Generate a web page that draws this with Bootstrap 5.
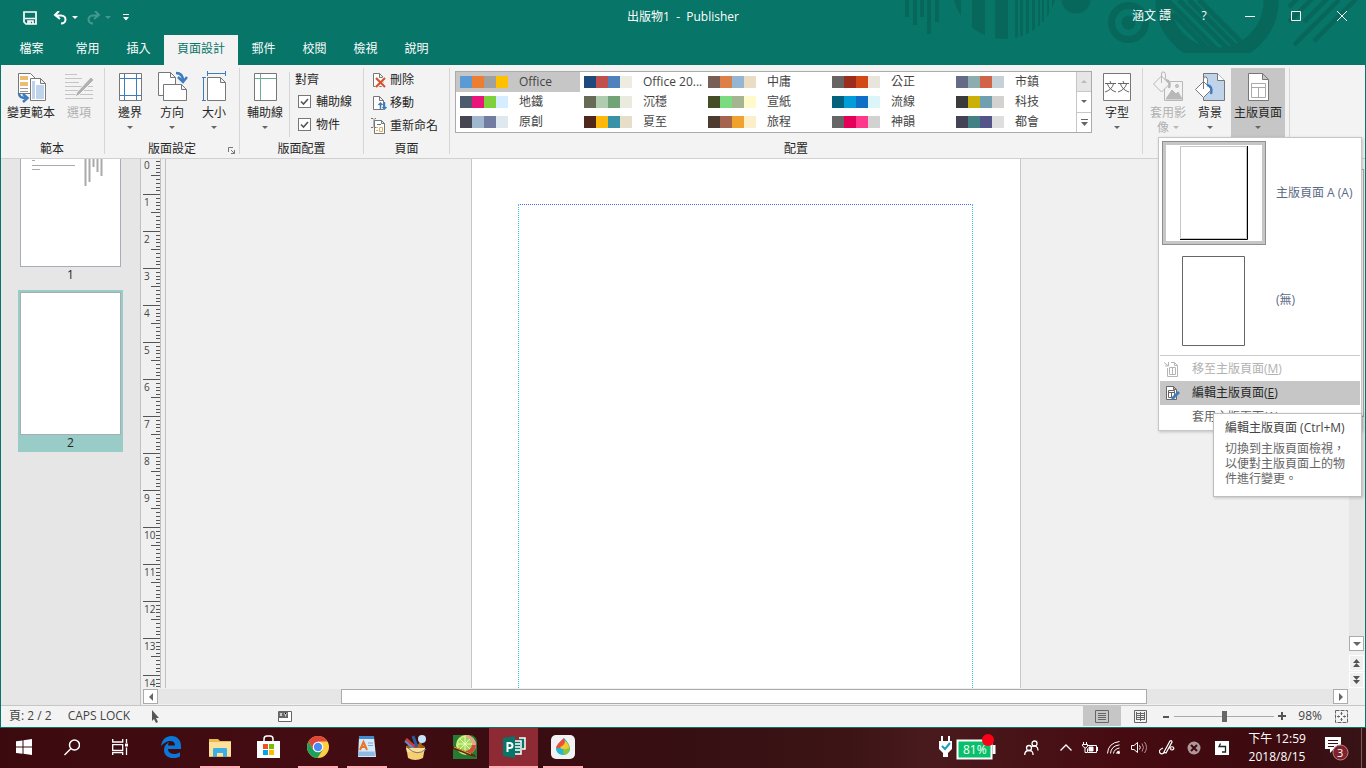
<!DOCTYPE html>
<html lang="zh-Hant">
<head>
<meta charset="utf-8">
<meta name="viewport" content="width=device-width, initial-scale=1">
<title>出版物1 - Publisher</title>
<link rel="stylesheet" href="https://cdn.jsdelivr.net/npm/bootstrap@5.3.0/dist/css/bootstrap.min.css">
<style>
:root{--pub:#077568;--line:#c6c6c6;--edge:#ababab}
body{font:12px/16px "Open Sans","Noto Sans CJK TC",sans-serif;color:#262626;background:#f0f0f0}
button{font:inherit;line-height:16px;color:inherit;background:none;border:0;padding:0}
svg{display:block;flex:none}
.app{border:solid var(--pub);border-width:0 1px 1px;min-height:0}
.topbar{background:var(--pub);color:#fff}
.deco{position:absolute;top:0;right:0}
.titlebar{height:35px}
.doc-title{position:absolute;left:0;right:0;top:9px;text-align:center;pointer-events:none}
.user{margin-right:10px}
.winbtn{width:46px;height:32px}
.qat{padding-left:22px;gap:8px}
.qat .tri{border-top-color:#fff}
.tabs a{color:#fff;width:51px;height:30px;line-height:28px;text-align:center;text-decoration:none}
.tabs a.file{width:61px}
.tabs a.now{width:74px;background:#f3f3f3;color:var(--pub)}
.ribbon{background:#f3f3f3;height:94px;border-bottom:1px solid #d0d0d0;padding:3px 0 4px}
.grp{border-right:1px solid #d5d5d5;padding:0 4px;height:86px}
.grp:first-child{padding-left:3px}
.grp-name{text-align:center;height:16px;margin-bottom:-3px}
.big{width:42px;height:69px;padding-top:3px;display:flex;flex-direction:column;align-items:center;white-space:nowrap}
.big svg{margin-bottom:2px}
.wide{width:54px}
.pressed{background:#c6c6c6}
.tri{display:inline-block;border:3px solid transparent;border-top-color:#666;border-bottom:0;flex:none}
.tri.up{border:3px solid transparent;border-top:0;border-bottom-color:#bbb}
.big .tri{margin-top:5px}
.off{color:#b1b1b1}
.off .tri{border-top-color:#b8b8b8}
.tick{appearance:none;width:13px;height:13px;border:1px solid #777;background:#fff;margin:0}
.tick:checked{background:#fff url("data:image/svg+xml,%3Csvg xmlns='http://www.w3.org/2000/svg' viewBox='0 0 11 11'%3E%3Cpath d='M2 5.5l2.5 2.5L9 3' fill='none' stroke='%23555' stroke-width='1.6'/%3E%3C/svg%3E")}
.small-row{height:23px;gap:3px}
.align-box{border-left:1px solid #d5d5d5;margin:4px 0 0 3px;padding-left:5px}
.align-box .small-row{padding-left:3px;gap:5px}
.align-box div:first-child{padding-bottom:2px}
.page-cmds{padding-left:3px}
.gallery{border:1px solid var(--edge);background:#fff;height:62px;margin:3px 0 0 1px}
.schemes{display:grid;grid-template-columns:repeat(5,124px);grid-auto-rows:20px}
.scheme{display:flex;align-items:center;padding-left:4px;color:#444}
.scheme i{width:12px;height:12px;background:var(--c)}
.scheme span{margin-left:11px}
.gal-nav{width:15px;border-left:1px solid var(--line)}
.gal-nav button{flex:1;border-bottom:1px solid var(--line);display:flex;flex-direction:column;align-items:center;justify-content:center;gap:2px}
.gal-nav button:first-child{background:#e6e6e6}
.gal-nav button:last-child{border:0}
.pane{width:140px;background:#e6e6e6;border-right:1px solid #c0c0c0}
.thumb{background:#fff;border:1px solid #a6adb8;width:101px}
.thumb-btn{width:105px;margin-left:17px;display:flex;flex-direction:column;align-items:center}
.thumb-btn.sel{background:#99ccc6;padding:2px 0 1px;margin-top:7px}
.ruler{width:20px;border-right:1px solid #c0c0c0;overflow:hidden}
.cm{height:37px;display:flex;align-items:flex-end;font-size:10px;line-height:12px;color:#444;position:relative}
.cm svg{margin-left:2px}
.cm b{position:absolute;left:3px;top:2px;font-weight:400}
.cm.zero{height:35px;overflow:hidden}
.cm.zero b{top:0}
.canvas{border-left:1px solid #c0c0c0;margin-left:4px;padding-right:23px;overflow:hidden}
.sheet{width:550px;background:#fff;border:solid var(--line);border-width:0 1px;padding:45px 47px 0 46px}
.guide{height:100%;border:1px dotted #30c8d0;border-top-color:#4f6bff;border-bottom:0}
.vbar{width:16px;padding-top:10px}
.track{background:#e6e6e6}
.knob{background:#fff;border:1px solid var(--edge)}
.sbtn{width:15px;height:15px;background:#fff;border:1px solid var(--edge);display:flex;align-items:center;justify-content:center}
.pbtn{width:15px;height:16px;background:#f0f0f0;border:1px solid #fff;display:flex;align-items:center;justify-content:center}
.pbtn:last-child{margin-top:1px}
.hbar{height:17px;padding:1px 17px 1px 2px}
.status{height:22px;border-top:1px solid var(--line);background:#f3f3f3;color:#444;padding-bottom:1px}
.pointer{margin-left:21px}
.xy{margin-left:118px}
.view{width:38px;height:20px;display:flex;align-items:center;justify-content:center}
.zoom{appearance:none;width:100px;height:11px;background:linear-gradient(#aaa,#aaa) center/100% 1px no-repeat;margin:0 4px}
.zoom::-webkit-slider-thumb{appearance:none;width:5px;height:11px;background:#666}
.fit{margin:0 17px 0 13px}
.menu{--bs-dropdown-min-width:204px;width:204px;top:72px;right:3px;font-size:12px;padding:3px 1px 1px;border:1px solid var(--line);border-radius:0;box-shadow:1px 1px 3px #0003;color:#666}
.master{display:flex;align-items:center;width:100%;color:#5b6a85;padding-left:2px}
.frame{width:104px;height:104px;margin-right:10px;display:flex;align-items:center;justify-content:center;border:1px solid transparent}
.frame.on{border-color:#8f8f8f;box-shadow:inset 0 0 0 3px #c6c6c6}
.frame.none{height:110px;padding-top:2px}
.menu-row{display:flex;align-items:center;height:24px;width:100%;padding-left:4px;gap:12px}
.menu-row.pressed{color:#262626}
.menu hr{margin:0 0 1px;border-color:#ccc;opacity:1}
.tip{position:absolute;top:275px;right:-1px;width:149px;height:84px;background:#fff;border:1px solid #bebebe;box-shadow:1px 1px 3px #0003;padding:6px 0 0 11px;color:#444;white-space:nowrap}
.tip p{line-height:15px;margin:5px 0 0;color:#666}
.taskbar{height:40px;color:#fff;background:linear-gradient(90deg,#3b0a0f,#430c12 22%,#3a0c11 38%,#361013 52%,#3c1416 62%,#491a1d 68%,#460b11 82%,#3c0a0f 93%,#371417)}
.task{width:49px;height:40px;padding-bottom:2px;display:flex;align-items:center;justify-content:center;position:relative}
.sys{width:48px}
.sys.end{margin-right:2px}
.run::after{content:"";position:absolute;left:5px;right:4px;bottom:0;height:2px;background:#ffaeb5}
.front{background:#8e2a33}
.front::after{left:0;right:0}
.tray{height:40px;padding-bottom:1px;display:flex;align-items:center;justify-content:center}
.w24{width:24px}.w27{width:27px}.w30{width:30px}.w46{width:46px}.w48{width:48px}
.power{margin-right:12px}
.clock{width:76px;line-height:18px;padding-left:4px}
.peek{width:5px;border-left:1px solid #80595c}
</style>
</head>
<body class="vh-100 d-flex flex-column overflow-hidden">
<svg width="0" height="0" class="position-absolute">
 <defs>
  <symbol id="ticks" viewBox="0 0 17 37"><path d="M0 .5h17M13 4.5h4M13 8.500h4M13 11.500h4M13 15.500h4M8 18.500h9M13 22.500h4M13 26.500h4M13 30.500h4M13 33.500h4" stroke="#555"/></symbol>
 </defs>
</svg>
<div class="app flex-fill d-flex flex-column">
 <header class="topbar position-relative">
  <svg class="deco" width="466" height="54" viewBox="900 0 466 54" fill="#08675b">
   <clipPath id="c1"><circle cx="1005.500" cy="-13" r="52"/></clipPath><clipPath id="c2"><circle cx="1218" cy="1" r="47"/></clipPath>
   <path d="M906 0h4v17h-4zM914 0h4v25h-4zM921 0h4v17h-4zM928 0h4v34h-4zM936 0h4v22h-4z"/>
   <path clip-path="url(#c1)" d="M953 0h9v40h-9zM973 0h13v40h-13zM996 0h13v40h-13zM1016 0h3v40h-3zM1021 0h3v40h-3zM1027 0h3v40h-3zM1033 0h3v40h-3zM1039 0h2v40h-2zM1043 0h2v40h-2zM1048 0h2v40h-2zM1053 0h3v40h-3z"/>
   <circle cx="1077" cy="-1" r="14.500"/><circle cx="1129.500" cy="22.500" r="7"/>
   <g fill="none" stroke="#08675b"><circle cx="1129.500" cy="22.500" r="17" stroke-width="7"/>
   <circle cx="1218" cy="1" r="54" stroke-width="15"/>
   <path clip-path="url(#c2)" stroke-width="5" d="M1168 0l60 60M1180 0l60 60M1190 0l60 60M1200 0l60 60M1174 14l40 40"/>
   <path stroke-width="4.500" d="M1295 45l45-45M1315 41l42-42M1290 7l8-8M1290 22l23-23M1305 22l23-23"/></g>
   <path d="M1180 53h80v1h-80z" fill="#077568"/>
  </svg>
  <div class="titlebar d-flex align-items-start position-relative">
   <div class="qat d-flex align-items-center h-100">
    <button class="me-1" aria-label="儲存"><svg width="14" height="14" fill="none" stroke="#fff" stroke-width="1.700"><path d="M1 1h12v12H3l-2-2zM2 7.500h10M5 13v-3h5v3M7 10.500v2"/></svg></button>
    <button aria-label="復原" class="d-flex align-items-center gap-1 ms-1"><svg width="15" height="14" fill="none" stroke="#fff" stroke-width="2"><path d="M6 0L2 4l5 4M2 4.500h6c6 0 6 8 0 8"/></svg><span class="tri"></span></button>
    <button aria-label="重做" class="d-flex align-items-center gap-1 opacity-25"><svg width="15" height="14" fill="none" stroke="#fff" stroke-width="2"><path d="M9 0l4 4-5 4M13 4.500H7c-6 0-6 8 0 8"/></svg><span class="tri"></span></button>
    <button aria-label="自訂" class="ms-1"><svg width="6" height="7" fill="#fff"><path d="M0 0h6v1H0zM0 3h6L3 6.500z"/></svg></button>
   </div>
   <div class="doc-title">出版物1&nbsp; -&nbsp; Publisher</div>
   <div class="ms-auto d-flex">
    <button class="user">涵文 譚</button>
    <button class="winbtn">?</button>
    <button class="winbtn" aria-label="最小化"><svg class="mx-auto" width="10" height="10" stroke="#fff"><path d="M0 5.500h10"/></svg></button>
    <button class="winbtn" aria-label="最大化"><svg class="mx-auto" width="10" height="10" stroke="#fff" fill="none"><path d="M.5.500h9v9h-9z"/></svg></button>
    <button class="winbtn" aria-label="關閉"><svg class="mx-auto" width="10" height="10" stroke="#fff"><path d="M0 0l10 10M10 0L0 10"/></svg></button>
   </div>
  </div>
  <nav class="tabs d-flex position-relative">
   <a class="file" href="#">檔案</a><a href="#">常用</a><a href="#">插入</a><a class="now" href="#">頁面設計</a><a href="#">郵件</a><a href="#">校閱</a><a href="#">檢視</a><a href="#">說明</a>
  </nav>
 </header>

 <div class="ribbon d-flex position-relative">
  <section class="grp d-flex flex-column justify-content-between">
   <div class="d-flex">
    <button class="big wide"><svg width="32" height="32" fill="#fff" stroke="#777"><path d="M3.500 2.500h12l5 5v15h-17z"/><path d="M5 5h8v4H5zM5 11h8v4H5z" fill="#ecbb74" stroke="none"/><path d="M5 17.500h8M5 20.500h8" stroke="#999"/><path d="M15.500 7.500h10l5 5v17h-15zM25.500 7.500v5h5"/><path d="M17 10h3v18h-3zM21 14h8v14h-8z" fill="#bfd3ea" stroke="none"/><path d="M4 22c0 4 2 5 8 5M8 23l4.500 4L8 31" fill="none" stroke="#3f7cbf" stroke-width="2.500"/></svg>變更範本</button>
    <button class="big off" disabled><svg width="32" height="32" stroke="#c4c4c4"><path d="M2 3.500h12M2 7.500h17M2 11.500h14M2 15.500h28M2 19.500h28M2 23.500h28M2 27.500h28"/><path d="M12 26l2-5L28 6l3 3-15 15z" fill="#b1b1b1" stroke="#f3f3f3"/></svg>選項</button>
   </div>
   <div class="grp-name">範本</div>
  </section>
  <section class="grp d-flex flex-column justify-content-between position-relative">
   <div class="d-flex">
    <button class="big"><svg width="32" height="32" fill="#fff" stroke="#777"><path d="M5.500 2.500h22v27h-22z"/><path d="M10.500 3v26M22.500 3v26M6 7.500h21M6 24.500h21" stroke="#3f7cbf"/></svg>邊界<span class="tri"></span></button>
    <button class="big"><svg width="32" height="32" fill="#fff" stroke="#777"><path d="M2.500 1.500h12l5 5v18h-17zM14.500 1.500v5h5"/><path d="M7.500 13.500h18l5 5v11h-23zM25.500 13.500v5h5"/><path d="M20 2c4 0 7 2 7 8M22 6l5 5 4-5" fill="none" stroke="#3f7cbf" stroke-width="2.500"/></svg>方向<span class="tri"></span></button>
    <button class="big"><svg width="32" height="32" fill="#fff" stroke="#777"><path d="M9.500 6.500h13l5 5v18h-18zM22.500 6.500v5h5"/><path d="M9 2.500h19M9.500 0v5M27.500 0v5M5.500 6v23M4 6.500h4M4 29.500h4" stroke="#3f7cbf"/></svg>大小<span class="tri"></span></button>
   </div>
   <div class="grp-name">版面設定</div>
   <button class="position-absolute bottom-0 end-0 me-1" aria-label="對話方塊啟動器"><svg width="7" height="7" fill="none" stroke="#777"><path d="M.5 5V.5H5M3 3l3.500 3.500M6.500 3v3.500H3"/></svg></button>
  </section>
  <section class="grp d-flex flex-column justify-content-between" style="width:124px">
   <div class="d-flex">
    <button class="big flex-shrink-0"><svg width="32" height="32" fill="#fff" stroke="#777"><path d="M5.500 2.500h22v27h-22z"/><path d="M11.500 3v26M6 7.500h21" stroke="#6cab94"/></svg>輔助線<span class="tri"></span></button>
    <div class="align-box">
     <div>對齊</div>
     <div class="d-flex align-items-center small-row"><input class="tick" type="checkbox" id="k1" checked><label for="k1">輔助線</label></div>
     <div class="d-flex align-items-center small-row"><input class="tick" type="checkbox" id="k2" checked><label for="k2">物件</label></div>
    </div>
   </div>
   <div class="grp-name">版面配置</div>
  </section>
  <section class="grp d-flex flex-column justify-content-between" style="width:86px">
   <div class="page-cmds">
    <button class="small-row d-flex align-items-center"><svg width="16" height="16" fill="#fff" stroke="#777"><path d="M2.500 1.500h6l4 4v9h-10zM8.500 1.500v4h4"/><path d="M5 6l9 9M14 6l-9 9" stroke="#f3f3f3" stroke-width="4"/><path d="M5 6l9 9M14 6l-9 9" stroke="#d8502b" stroke-width="2"/></svg>刪除</button>
    <button class="small-row d-flex align-items-center"><svg width="16" height="16" fill="#fff" stroke="#777"><path d="M2.500 1.500h6l4 4v9h-10zM8.500 1.500v4h4"/><path d="M9.500 14V8M7.500 10l2-2 2 2M13.500 7v7M11.500 12l2 2 2-2" fill="none" stroke="#3f7cbf" stroke-width="1.500"/></svg>移動</button>
    <button class="small-row d-flex align-items-center text-nowrap"><svg width="16" height="16" fill="#fff" stroke="#777"><path d="M3.500 2.500h7l3 3v10h-10zM10.500 2.500v3h3"/><path d="M0 .5h2l1 1 1-1h1M3 2v6M0 9.500h2l1-1 1 1h1" fill="none"/><path d="M6 6.500h4" stroke="#3f7cbf"/><path d="M5 9.500h2M8.500 9.500h3v4h-3zM5 12.500h2" stroke="#e6ad5d"/></svg>重新命名</button>
   </div>
   <div class="grp-name">頁面</div>
  </section>
  <section class="grp d-flex flex-column justify-content-between">
   <div class="d-flex">
    <div class="gallery d-flex">
     <div class="schemes" id="schemes"></div>
     <div class="gal-nav d-flex flex-column">
      <button aria-label="上"><span class="tri up"></span></button>
      <button aria-label="下"><span class="tri"></span></button>
      <button aria-label="更多"><svg width="7" height="7" fill="#666"><path d="M0 0h7v1H0zM0 3h7L3.500 7z"/></svg></button>
     </div>
    </div>
    <button class="big ms-1"><svg width="32" height="32" fill="#fff"><path d="M2.500 2.500h27v27h-27z" stroke="#777"/><g fill="none" stroke="#666"><path d="M4 12.500h11M9 10l1 2.500M6.500 13q2 6 8.500 8M12.500 13q-2 6-8.500 8M17 12.500h11M22 10l1 2.500M19.500 13q2 6 8.500 8M25.500 13q-2 6-8.500 8"/></g></svg>字型<span class="tri"></span></button>
   </div>
   <div class="grp-name">配置</div>
  </section>
  <section class="grp d-flex">
   <button class="big off" disabled><svg width="32" height="32" fill="#f3f3f3" stroke="#b8b8b8"><path d="M12.500 10.500h18v19h-18z"/><path d="M14 28l6-9 4 4 2-2 4 7z" fill="#b8b8b8"/><circle cx="25" cy="15" r="1.500" fill="#ccc"/><path d="M1.500 13l8-8 8 8-8 8zM9.500 12V3q0-3 2.500-2t1 8" /><path d="M14 9q5 1 3 8" fill="none" stroke-width="2.500"/></svg>套用影<span class="d-flex align-items-center" style="line-height:13px">像<span class="tri m-0 ms-1"></span></span></button>
   <button class="big"><svg width="32" height="32" fill="#bfd3ea" stroke="#777"><path d="M9.500 2.500h14l7 7v20h-21z"/><path d="M23.500 2.500v7h7" fill="#fff"/><path d="M1.500 18.500l8-8 8 8-8 8zM9.500 18V8q0-3 2.500-2t1 8" fill="#fff"/><path d="M13 14q6 1 4 9" fill="none" stroke="#3f7cbf" stroke-width="2.500"/></svg>背景<span class="tri"></span></button>
   <button class="big wide pressed" id="masterBtn"><svg width="32" height="32" fill="#fff" stroke="#777"><path d="M6.500 2.500h14l6 6v21h-20zM20.500 2.500v6h6"/><path d="M9.500 12.500h14v14h-14zM9.500 16.500h14M16.500 16v10" stroke="#aaa"/></svg>主版頁面<span class="tri"></span></button>
  </section>
  <div class="dropdown-menu show menu">
   <button class="master"><span class="frame on"><svg width="69" height="95"><path d="M.5.500h66v92H.5z" fill="#fff" stroke="#c6c6c6"/><path d="M0 93.500h67.500V0" fill="none" stroke="#000"/></svg></span>主版頁面 A (A)</button>
   <button class="master"><span class="frame none"><svg width="64" height="91"><path d="M.5.500h62v89H.5z" fill="#fff" stroke="#666"/></svg></span>(無)</button>
   <hr>
   <button class="menu-row off" disabled><svg width="16" height="16" fill="none" stroke="#b5b5b5"><path d="M3.500 7v8.500h10V4.500l-3-3H7M5.500 6.500h6v7h-6zM8.500 7v6M10.500 1.500v3h3M0 1.500l4 3M4.500 1v4H1"/></svg><span>移至主版頁面(<u>M</u>)</span></button>
   <button class="menu-row pressed"><svg width="16" height="16" fill="#fff" stroke="#666"><path d="M2.500 1.500h7l3 3v10h-10zM9.500 1.500v3h3M4.500 5.500h6v7h-6zM4.500 7.500h6M7.500 8v4"/><path d="M8 14l7-7" stroke="#3f7cbf" stroke-width="3"/></svg><span>編輯主版頁面(<u>E</u>)</span></button>
   <button class="menu-row"><svg width="16" height="16"></svg><span>套用主版頁面(<u>A</u>)</span></button>
   <div class="tip" role="tooltip">編輯主版頁面 (Ctrl+M)<p>切換到主版頁面檢視，<br>以便對主版頁面上的物<br>件進行變更。</p></div>
  </div>
 </div>

 <div class="flex-fill d-flex" style="min-height:0">
  <aside class="pane flex-shrink-0">
   <button class="thumb-btn"><span class="thumb d-block border-top-0"><svg width="99" height="107" stroke="#aaa"><path d="M11 1.500h3M11 6.500h43M11 10.500h8"/><path d="M64.500 0v27M68.500 0v23M72.500 0v8M76.500 0v13M80.500 0v17" stroke-width="2"/></svg></span>1</button>
   <button class="thumb-btn sel"><span class="thumb d-block"><svg width="99" height="141"></svg></span>2</button>
  </aside>
  <div class="flex-fill d-flex flex-column" style="min-width:0">
   <div class="flex-fill d-flex" style="min-height:0">
    <div class="ruler flex-shrink-0" id="ruler"></div>
    <main class="canvas flex-fill d-flex justify-content-center"><div class="sheet"><div class="guide"></div></div></main>
    <div class="vbar d-flex flex-column flex-shrink-0">
     <div class="track flex-fill"><div class="knob" style="width:15px;height:53%"></div></div>
     <button class="sbtn" aria-label="向下"><svg width="8" height="4" fill="#666"><path d="M0 0h8L4 4z"/></svg></button>
     <button class="pbtn mt-1" aria-label="上一頁"><svg width="7" height="8" fill="#555"><path d="M3.500 0L7 4H0zM3.500 4L7 8H0z"/></svg></button>
     <button class="pbtn" aria-label="下一頁"><svg width="7" height="8" fill="#555"><path d="M3.500 8L7 4H0zM3.500 4L7 0H0z"/></svg></button>
    </div>
   </div>
   <div class="hbar d-flex flex-shrink-0">
    <button class="sbtn" aria-label="向左"><svg width="4" height="8" fill="#666"><path d="M4 0v8L0 4z"/></svg></button>
    <div class="track flex-fill"><div class="knob h-100" style="width:68.600%;margin-left:15.600%"></div></div>
    <button class="sbtn" aria-label="向右"><svg width="4" height="8" fill="#666"><path d="M0 0v8l4-4z"/></svg></button>
   </div>
  </div>
 </div>

 <footer class="status d-flex align-items-center">
  <span class="ms-2">頁: 2 / 2</span><span class="ms-3">CAPS LOCK</span>
  <svg class="pointer" width="9" height="13" fill="#555"><path d="M1 0l7 8H5l2 4-2 1-2-4-2 2z"/></svg>
  <svg class="xy" width="14" height="11"><path d="M.5.500h13v10H.5z" fill="#fff" stroke="#666"/><path d="M1 1h9v6H1z" fill="#666"/><path d="M2 2l2 3M4 2L2 5M6 2l1.500 2L9 2M7.500 4v1.500" stroke="#fff" stroke-width=".8"/></svg>
  <div class="ms-auto d-flex align-items-center">
   <button class="view pressed" aria-label="單頁"><svg width="14" height="13" fill="none" stroke="#666"><path d="M.5.500h13v12H.5zM3 3.500h8M3 5.500h8M3 7.500h8M3 9.500h8"/></svg></button>
   <button class="view" aria-label="雙頁"><svg width="13" height="13" fill="none" stroke="#666"><path d="M.5.500h12v12H.5zM2 3.500h9M2 5.500h9M2 7.500h9M2 9.500h9M6.500 2v9M2.500 2v8M10.500 2v8"/></svg></button>
   <button aria-label="縮小" class="ms-1"><svg width="7" height="7" fill="#555"><path d="M0 3h6v2H0z"/></svg></button>
   <input class="zoom" type="range" min="10" max="187" value="98" aria-label="縮放">
   <button aria-label="放大"><svg width="8" height="8" fill="#555"><path d="M0 3h3V0h2v3h3v2H5v3H3V5H0z"/></svg></button>
   <span class="ms-2 ps-1">98%</span>
   <button class="fit" aria-label="符合視窗"><svg width="13" height="13" fill="none" stroke="#666"><path d="M.5.500h12v12H.5z" stroke-dasharray="4 1"/><path d="M6.500 2v3M6.500 8v3M2 6.500h3M8 6.500h3M5.500 3.500h2M5.500 9.500h2M3.500 5.500v2M9.500 5.500v2"/></svg></button>
  </div>
 </footer>
</div>

<div class="taskbar d-flex flex-shrink-0">
 <button class="task sys" aria-label="開始"><svg width="16" height="16" fill="#fff"><path d="M0 2.300L6.500 1.400v6.200H0zM7.500 1.200L16 0v7.600H7.500zM0 8.600h6.500v6.200L0 13.900zM7.500 8.600H16V16l-8.500-1.200z"/></svg></button>
 <button class="task sys" aria-label="搜尋"><svg width="16" height="17" fill="none" stroke="#fff" stroke-width="1.500"><circle cx="10.500" cy="6" r="5"/><path d="M7 9.500L.5 16"/></svg></button>
 <button class="task sys end" aria-label="工作檢視"><svg width="17" height="16" fill="none" stroke="#fff" stroke-width="1.300"><path d="M.7 0v3h10V0M.7 5.700h10v5.600H.7zM.7 16v-2.500h10V16M14.500 0v4M14.500 8.500V16"/><path d="M13 4.500h3v3h-3z" fill="#fff" stroke="none"/></svg></button>
 <button class="task" aria-label="Edge"><svg width="20" height="22" fill="#0b78d7"><path d="M0 10C1 3.500 5 0 10.500 0 16.500 0 20 4.500 20 10v3H7c0 5 7 6.500 12 3.200v4.300C11 24.500 3 21 3 14 3 10.500 5 7.500 8.500 6 7 7.500 7 9 7 9.500h7c0-6-8-6-14 .5z"/></svg></button>
 <button class="task run" aria-label="檔案總管"><svg width="22" height="19"><path d="M0 1h9l2 2h11v16H0z" fill="#e9b84e"/><path d="M0 4h22v14H0z" fill="#fde19a"/><path d="M4 19v-8q0-1 1-1h12q1 0 1 1v8h-4v-4H8v4z" fill="#3aaee6"/></svg></button>
 <button class="task" aria-label="Store"><svg width="23" height="24"><path d="M7 7V4q0-3 3-3h3q3 0 3 3v3" fill="none" stroke="#fff" stroke-width="1.500"/><path d="M0 6h23v17H0z" fill="#fff"/><path d="M6 9h5v5H6z" fill="#f25022"/><path d="M12 9h5v5h-5z" fill="#7fba00"/><path d="M6 15h5v5H6z" fill="#00a4ef"/><path d="M12 15h5v5h-5z" fill="#ffb900"/></svg></button>
 <button class="task run" aria-label="Chrome"><svg width="22" height="22"><circle cx="11" cy="11" r="11" fill="#ffcd42"/><path d="M1.500 5.500A11 11 0 0 1 20.500 5.500H11L6.200 13.700z" fill="#e0453a"/><path d="M1.500 5.500A11 11 0 0 0 10.500 22l5.300-8.300H6.200z" fill="#1fa05a"/><circle cx="11" cy="11" r="5.300" fill="#fff"/><circle cx="11" cy="11" r="4.200" fill="#4c8bf5"/></svg></button>
 <button class="task run" aria-label="WordPad"><svg width="20" height="22"><path d="M2 1h15l2 20H1z" fill="#d6eafb"/><path d="M2 0h15v3H2z" fill="#438bc8"/><path d="M11 7h5M11 9.500h5" stroke="#7ba6d6"/><path d="M1.500 15.500h16L18 20H1z" fill="#8db9e2"/><path d="M3 14L6.500 6 10 14M4.500 11h4" fill="none" stroke="#ed7423" stroke-width="2"/></svg></button>
 <button class="task" aria-label="小畫家"><svg width="24" height="25"><path d="M2 11l19 1-2 11q-8 4-15 0z" fill="#f6cf72"/><ellipse cx="11.500" cy="12" rx="9.500" ry="3" fill="#9c5a20"/><path d="M2 4l10 9" stroke="#d93831" stroke-width="3"/><path d="M1 6l9 8" stroke="#5294da" stroke-width="2"/><path d="M9 1l4 11" stroke="#295b9d" stroke-width="3"/><path d="M18 5l-4 9" stroke="#a86522" stroke-width="3"/><circle cx="18" cy="4" r="4" fill="#c5e4fb"/><path d="M2 13h19l-1 4-17 0z" fill="#fbe09a"/><path d="M4 13q9 9 18 1" fill="none" stroke="#777"/></svg></button>
 <button class="task" aria-label="PaintTool SAI"><svg width="24" height="24"><path d="M0 0h17a7 7 0 0 1 7 7v17H0z" fill="#267b34"/><circle cx="13" cy="10" r="10" fill="#d5f287"/><path d="M13 0a10 10 0 0 1 10 10h-10z" fill="#eaa28d"/><path d="M23 10a10 10 0 0 1-10 10V10z" fill="#d24b3b"/><circle cx="12" cy="9" r="7" fill="#9edb56"/><path d="M12 2v14M5 9h14M7 4l10 10M17 4L7 14" stroke="#effac8"/><path d="M0 11l22 9 1 2-5-1L0 14z" fill="#5b2c0b"/><path d="M1 12l17 7" stroke="#e6a346"/></svg></button>
 <button class="task run front" aria-label="Publisher"><svg width="24" height="24"><path d="M17 3h6v11h-3M11 6h8v13h-8z" fill="#087568" stroke="#fff" stroke-width="1.500"/><path d="M13 9h5M13 12h5M13 15h5" stroke="#fff" stroke-width="1.500"/><path d="M1 3l12-2v22L1 21z" fill="#077568"/><path d="M5.500 17V8h2q3 0 3 2.500T7.500 13h-2" fill="none" stroke="#fff" stroke-width="2"/></svg></button>
 <button class="task run" aria-label="MediBang"><svg width="24" height="24"><rect width="24" height="24" rx="5" fill="#f2f2f2"/><path d="M13 3q-8 7-8 11a7 6 0 0 0 14 0q0-5-6-11z" fill="#20b8d3"/><path d="M13 3q-8 7-8 10 7 1 9-6z" fill="#f04d38"/><path d="M14 5q5 5 5 9-1 4-5 6-4-3 0-8z" fill="#8ac43f"/><path d="M14 6q4 3 4 7-7 3-9-1 5-2 5-6z" fill="#f7c72d"/></svg></button>

 <div class="ms-auto d-flex">
  <div class="tray power"><svg width="59" height="28" font-size="12"><path d="M5 2v6M12 2v6" stroke="#fff" stroke-width="2"/><path d="M2 7h13v8l-4 4v4H6v-4l-4-4z" fill="#fff"/><path d="M5 12l3 3 5-6" fill="none" stroke="#1e9dbd" stroke-width="2"/><path d="M20.500 6.500h34v18h-34z" fill="#08c069" stroke="#fff" stroke-width="2"/><path d="M55.500 11h3v9h-3z" fill="#fff"/><text x="26" y="20" fill="#fff">81%</text><circle cx="51" cy="6" r="6" fill="#ff0018"/></svg></div>
  <button class="tray w46" aria-label="人員"><svg width="15" height="16" fill="none" stroke="#fff" stroke-width="1.300"><circle cx="10.500" cy="3.500" r="2.500"/><circle cx="5" cy="8" r="2.500"/><path d="M.7 15q0-4.500 4.300-4.500T9 15M7 6.500q7-2 7 4"/></svg></button>
  <button class="tray w24" aria-label="顯示隱藏的圖示"><svg width="12" height="7" fill="none" stroke="#fff" stroke-width="1.300"><path d="M.5 6.500L6 1l5.500 5.500"/></svg></button>
  <button class="tray w24" aria-label="電源"><svg width="16" height="12" fill="none" stroke="#fff"><path d="M5.500 3.500h9v7h-9v-4M15.500 5v4M1.500 0v2M4.500 0v2M.5 2.500h5v2q-2 2-2.500 1.500T.5 4zM3 6v4.500h2"/><path d="M7 5h4v4H7z" fill="#fff"/></svg></button>
  <button class="tray w24" aria-label="網路"><svg width="14" height="13" fill="none" stroke="#fff"><path d="M.5 12.500Q1 2 12.500.5M3.500 12.500Q4 5 12.500 3.800M6.500 12.500Q7 8 12.500 7M9.500 12.500q0-2 3-2.500" /><circle cx="11.500" cy="11.500" r="1.500" fill="#fff" stroke="none"/></svg></button>
  <button class="tray w27" aria-label="音量"><svg width="17" height="13" fill="none" stroke="#fff"><path d="M.5 4.500H3l3.500-3v10L3 8.500H.5zM8.500 4.500q1.500 2 0 4"/><path d="M11 2.500q3 4 0 8M13.500 1q4 5.500 0 11" stroke="#b79295"/></svg></button>
  <button class="tray w27" aria-label="筆"><svg width="16" height="15" fill="none" stroke="#fff" stroke-width="1.200"><path d="M5 12L11 1q2-1 2 1L7 13zM4 8q-5 2-3 5 2 2 5-1M9 9q3-3 5-2 2 2-1 3-2 0-1-2"/></svg></button>
  <button class="tray w27" aria-label="同步"><svg width="14" height="14"><circle cx="7" cy="7" r="6.500" fill="#ae9799"/><path d="M4 4l6 6M10 4l-6 6" stroke="#3c0a0f" stroke-width="2"/></svg></button>
  <button class="tray w30" aria-label="輸入法"><svg width="14" height="14"><path d="M0 0h14v14H0z" fill="#fff"/><path d="M5.500 2.500L4 5.500h6.500V11H7" fill="none" stroke="#222" stroke-width="1.300"/></svg></button>
  <button class="tray clock">下午 12:59<br>2018/8/15</button>
  <button class="tray w48" aria-label="控制中心"><svg width="24" height="26" font-size="11"><path d="M0 2h16v12h-7l-4 4v-4H0z" fill="#fff"/><path d="M3 5.500h10M3 8.500h10M3 11.500h6" stroke="#460b11"/><circle cx="15.500" cy="17.500" r="7.500" fill="#7e222b" stroke="#c58086"/><text x="12" y="22" fill="#fff">3</text></svg></button>
  <div class="peek"></div>
 </div>
</div>
<script src="https://cdn.jsdelivr.net/npm/bootstrap@5.3.0/dist/js/bootstrap.bundle.min.js"></script>
<script>
const schemes = [
 ['Office','#5b9bd5 #ed7d31 #a0a0a0 #ffc000'],['Office 20...','#1f497d #c0504d #4f81bd #eeece1'],['中庸','#775f55 #dd8047 #94b6d2 #ebddc3'],['公正','#696464 #9b2d1f #d34817 #e9e5dc'],['市鎮','#646b86 #8cadae #d16349 #c5d1d7'],
 ['地鐵','#4e5b6f #ea157a #7fd13b #d6ecff'],['沉穩','#676a55 #b0ccb0 #72a376 #eaebde'],['宣紙','#444d26 #7bdb80 #a5b592 #fefac9'],['流線','#04617b #009dd9 #0f6fc6 #dbf5f9'],['科技','#3b3b3b #ccb00a #6ea0b0 #d4d2d0'],
 ['原創','#464653 #9fb8cd #727ca3 #dde9ec'],['夏至','#4f271c #feb80a #3891a7 #e7dec9'],['旅程','#4e3b30 #a5644e #f0a22e #fbeec9'],['神韻','#666666 #e40059 #ff388c #d2d2d2'],['都會','#424456 #438086 #53548a #dedede']];
document.getElementById('schemes').innerHTML = schemes.map(([name, colours], i) =>
 `<button class="scheme${i ? '' : ' pressed'}">${colours.split(' ').map(c => `<i style="--c:${c}"></i>`).join('')}<span>${name}</span></button>`).join('');
document.getElementById('ruler').innerHTML = Array.from({length: 15}, (_, n) =>
 `<div class="cm${n ? '' : ' zero'}"><svg width="17" height="37"><use href="#ticks"/></svg><b>${n}</b></div>`).join('');
</script>
</body>
</html>
